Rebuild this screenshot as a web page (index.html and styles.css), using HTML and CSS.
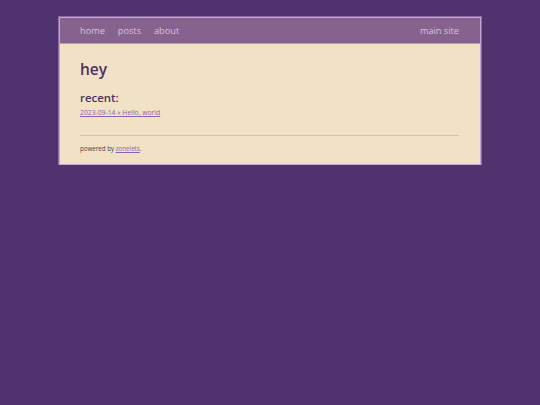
FILE: index.html
```html
<!DOCTYPE html>
<html>
<head>
<meta charset="utf-8">
<link rel="stylesheet" href="styles.css">
</head>
<body>
<div class="frame">
  <nav class="nav">
    <div class="nav-left">
      <a href="#">home</a>
      <a href="#">posts</a>
      <a href="#">about</a>
    </div>
    <a href="#">main site</a>
  </nav>
  <main class="content">
    <h1 class="title">hey</h1>
    <h2 class="sub">recent:</h2>
    <a class="post" href="#">2023-09-14 » Hello, world</a>
    <hr class="rule">
    <p class="footer">powered by <a href="#">zonelets</a>.</p>
  </main>
</div>
</body>
</html>
```

FILE: styles.css
```css
html, body {
  margin: 0;
  padding: 0;
  background: #50326f;
  font-family: "Open Sans", sans-serif;
}
.frame {
  width: 420px;
  margin: 17px auto 0;
  border: 1px solid #c6a6d6;
  outline: 1px solid #8a6aa2;
  background: #f1e2c5;
}
.nav {
  display: flex;
  justify-content: space-between;
  align-items: center;
  height: 25px;
  padding: 0 21px 0 20px;
  background: #86628f;
  border-bottom: 1px solid #b496c0;
}
.nav a {
  color: #d8c2df;
  text-decoration: none;
  font-size: 9.2px;
}
.nav-left {
  display: flex;
  gap: 13px;
}
.content {
  padding: 13px 21px 10px 20px;
  color: #4a3162;
}
.title {
  margin: 0;
  font-size: 15.5px;
  font-weight: 600;
  line-height: 24px;
}
.sub {
  margin: 8px 0 0;
  font-size: 11.4px;
  font-weight: 600;
  line-height: 18px;
}
.post {
  display: block;
  font-size: 6.8px;
  color: #8a62b0;
  line-height: 12px;
}
.rule {
  margin: 16px 0 0;
  border: 0;
  border-top: 1px solid #d4c3a6;
  height: 0;
}
.footer {
  margin: 8px 0 0;
  font-size: 6.2px;
  color: #4a3a40;
  line-height: 10px;
}
.footer a {
  color: #8a62b0;
}
```
